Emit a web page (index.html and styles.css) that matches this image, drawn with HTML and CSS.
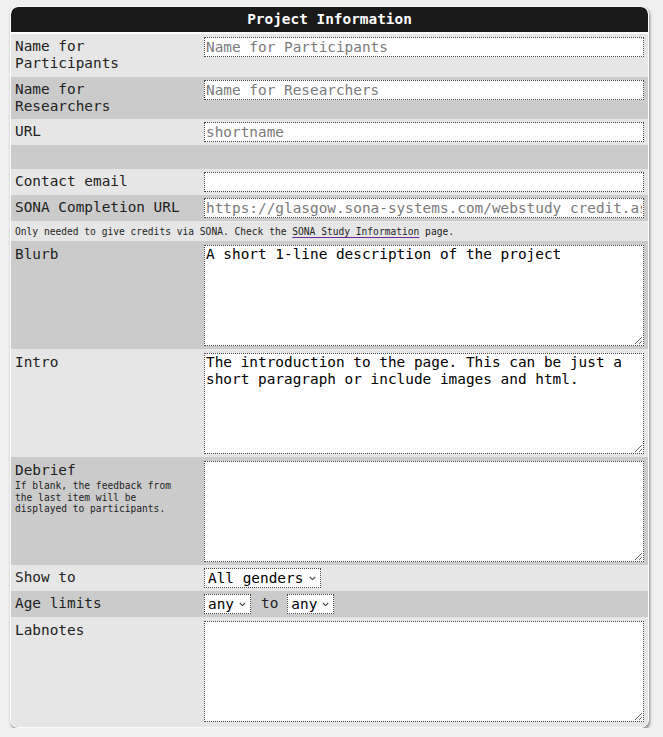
FILE: index.html
```html
<!DOCTYPE html>
<html lang="en">
<head>
<meta charset="utf-8">
<title>Project Information</title>
<link rel="stylesheet" href="styles.css">
</head>
<body>
<form class="panel">
  <div class="panel-head">Project Information</div>

  <div class="row light two">
    <label class="lbl">Name for Participants</label>
    <div class="fld"><input class="txt" type="text" placeholder="Name for Participants"></div>
  </div>
  <div class="row dark two">
    <label class="lbl">Name for Researchers</label>
    <div class="fld"><input class="txt" type="text" placeholder="Name for Researchers"></div>
  </div>
  <div class="row light">
    <label class="lbl">URL</label>
    <div class="fld"><input class="txt" type="text" placeholder="shortname"></div>
  </div>
  <div class="row dark empty"></div>
  <div class="row light">
    <label class="lbl">Contact email</label>
    <div class="fld"><input class="txt" type="text"></div>
  </div>
  <div class="row dark">
    <label class="lbl">SONA Completion URL</label>
    <div class="fld"><input class="txt" type="text" placeholder="https://glasgow.sona-systems.com/webstudy_credit.aspx?experiment_id=1"></div>
  </div>
  <div class="row light note">
    <p class="note-text">Only needed to give credits via SONA. Check the <a href="#" class="note-link">SONA Study Information</a> page.</p>
  </div>
  <div class="row dark area">
    <label class="lbl">Blurb</label>
    <div class="fld"><textarea class="ta">A short 1-line description of the project</textarea></div>
  </div>
  <div class="row light area">
    <label class="lbl">Intro</label>
    <div class="fld"><textarea class="ta">The introduction to the page. This can be just a short paragraph or include images and html.</textarea></div>
  </div>
  <div class="row dark area">
    <div class="lbl">
      <label>Debrief</label>
      <div class="sub">If blank, the feedback from the last item will be displayed to participants.</div>
    </div>
    <div class="fld"><textarea class="ta"></textarea></div>
  </div>
  <div class="row light">
    <label class="lbl">Show to</label>
    <div class="fld inline">
      <span class="sel"><select><option>All genders</option></select><svg class="chev" width="7" height="5" viewBox="0 0 7 5"><path d="M0.8 1 L3.5 3.6 L6.2 1" fill="none" stroke="#444" stroke-width="1.1"/></svg></span>
    </div>
  </div>
  <div class="row dark">
    <label class="lbl">Age limits</label>
    <div class="fld inline">
      <span class="sel"><select><option>any</option></select><svg class="chev" width="7" height="5" viewBox="0 0 7 5"><path d="M0.8 1 L3.5 3.6 L6.2 1" fill="none" stroke="#444" stroke-width="1.1"/></svg></span>
      <span class="to">to</span>
      <span class="sel"><select><option>any</option></select><svg class="chev" width="7" height="5" viewBox="0 0 7 5"><path d="M0.8 1 L3.5 3.6 L6.2 1" fill="none" stroke="#444" stroke-width="1.1"/></svg></span>
    </div>
  </div>
  <div class="row light area last">
    <label class="lbl">Labnotes</label>
    <div class="fld"><textarea class="ta"></textarea></div>
  </div>
</form>
</body>
</html>
```

FILE: styles.css
```css
* { box-sizing: border-box; }

html, body {
  margin: 0;
  padding: 0;
  background: #f0f0f0;
}

body {
  font-family: "DejaVu Sans Mono", "Liberation Mono", monospace;
  font-size: 14.4px;
  line-height: 1.2;
  color: #222;
  padding: 6px 14px 0 10px;
}

.panel {
  display: block;
  width: 639px;
  margin: 0;
  background: #e6e6e6;
  border: 1px solid #fcfcfc;
  border-radius: 8px;
  box-shadow: 1px 2px 3px rgba(0, 0, 0, 0.45);
  overflow: hidden;
}

.panel-head {
  height: 27px;
  background: #1a1a1a;
  color: #fff;
  font-weight: bold;
  text-align: center;
  line-height: 25px;
  border-bottom: 2px solid #fff;
  border-radius: 7px 7px 0 0;
}

.row {
  display: grid;
  grid-template-columns: 185px 440px;
  column-gap: 4px;
  padding: 3px 4px;
  align-items: start;
}

.row.light { background: #e6e6e6; }
.row.dark { background: #cbcbcb; }

.row.two { padding: 3px 4px 4px; }
.row.empty { height: 24px; }
.row.area { padding: 4px 4px 3px; }
.row.last { padding-bottom: 5px; }

.row.note {
  display: block;
  padding: 3px 4px 2px;
}

.note-text {
  margin: 0;
  font-size: 9.6px;
  line-height: 15px;
  color: #222;
}

.note-link {
  color: #222;
  text-decoration: underline;
  text-decoration-color: #6a2a9a;
  text-underline-offset: 2px;
}

.lbl {
  display: block;
  max-width: 172px;
  padding-top: 1px;
}

.sub {
  font-size: 9.6px;
  line-height: 11.5px;
  margin-top: 1px;
}

.fld { display: block; }

.fld.inline {
  display: flex;
  align-items: center;
  gap: 0;
  height: 20px;
}

.txt {
  display: block;
  width: 440px;
  height: 20px;
  margin: 0;
  padding: 0 1px;
  border: 1px dotted #444;
  background: #fff;
  font-family: inherit;
  font-size: 14.4px;
  color: #222;
  outline: none;
}

.txt::placeholder { color: #7a7a7a; }

.ta {
  display: block;
  width: 440px;
  height: 101px;
  margin: 0;
  padding: 0 1px;
  border: 1px dotted #444;
  background: #fff;
  font-family: inherit;
  font-size: 14.4px;
  line-height: 1.2;
  color: #000;
  outline: none;
}

.sel {
  display: inline-flex;
  align-items: center;
  height: 20px;
  border: 1px dotted #444;
  background: #fff;
  padding: 0 4px 0 3px;
}

.sel select {
  appearance: none;
  -webkit-appearance: none;
  border: 0;
  background: transparent;
  padding: 0;
  margin: 0 5px 0 0;
  font-family: inherit;
  font-size: 14.4px;
  color: #000;
  outline: none;
}

.chev { display: block; margin-top: 1px; }

.to {
  margin: 0 9px 0 10px;
}
```
